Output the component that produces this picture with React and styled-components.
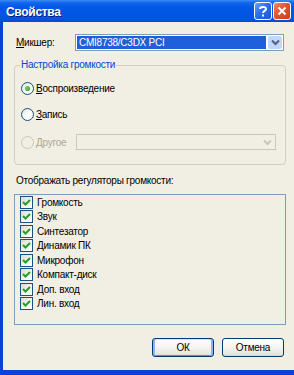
import React from "react";
import styled, { createGlobalStyle } from "styled-components";

const Global = createGlobalStyle`
  html, body { margin: 0; padding: 0; }
  body { width: 294px; height: 375px; overflow: hidden; background: #fff; }
  * { box-sizing: border-box; }
`;

const FONT = `"Liberation Sans", Arial, sans-serif`;

const Window = styled.div`
  width: 294px;
  height: 375px;
  display: flex;
  flex-direction: column;
  background: #0842d6;
  font-family: ${FONT};
  font-size: 10px;
  letter-spacing: -0.25px;
  color: #000;
`;

const TitleBar = styled.div`
  height: 22px;
  flex: none;
  display: flex;
  align-items: flex-start;
  padding: 0 3px 0 6px;
  background: linear-gradient(
    to bottom,
    #3d8cf6 0%,
    #1268f0 12%,
    #0358e8 30%,
    #0156e4 60%,
    #0255e0 85%,
    #0a48d0 100%
  );
`;

const Title = styled.div`
  flex: 1;
  padding-top: 5px;
  font-family: "Liberation Sans", Arial, sans-serif;
  font-weight: bold;
  font-size: 12px;
  color: #fff;
  text-shadow: 1px 1px 0 #0a1f7a;
  letter-spacing: -0.3px;
`;

const CaptionButtons = styled.div`
  display: flex;
  gap: 1px;
  padding-top: 2px;
`;

const CaptionButton = styled.div`
  width: 18px;
  height: 18px;
  border: 1px solid #fff;
  border-radius: 3px;
  display: flex;
  align-items: center;
  justify-content: center;
  background: ${(p) =>
    p.$close
      ? "linear-gradient(135deg, #f0876a 0%, #e2532f 45%, #c8401c 100%)"
      : "linear-gradient(135deg, #6aa0ff 0%, #2a6ef0 45%, #1a55d8 100%)"};
`;

const Body = styled.div`
  flex: 1;
  margin: 0 0 5px 3px;
  background: #f1efe3;
  padding: 12px 8px 13px 11px;
  display: flex;
  flex-direction: column;
`;

const MixerRow = styled.div`
  display: flex;
  align-items: center;
  height: 17px;
`;

const FieldLabel = styled.label`
  width: 61px;
  padding-left: 2px;
  flex: none;
`;

const Combo = styled.div`
  width: ${(p) => p.$w}px;
  height: ${(p) => p.$h}px;
  border: 1px solid ${(p) => (p.$disabled ? "#c9c7ba" : "#7f9db9")};
  background: ${(p) => (p.$disabled ? "#f1efe3" : "#fff")};
  display: flex;
  align-items: stretch;
  padding: 1px;
  flex: none;
`;

const ComboValue = styled.div`
  flex: 1;
  background: #1f5fdb;
  color: #fff;
  padding-left: 2px;
  display: flex;
  align-items: center;
  margin-right: 2px;
`;

const ComboSpacer = styled.div`
  flex: 1;
`;

const ComboButton = styled.div`
  width: 14px;
  display: flex;
  align-items: center;
  justify-content: center;
  background: ${(p) => (p.$disabled ? "transparent" : "#c6d6fb")};
  border-radius: 2px;
`;

const GroupBox = styled.div`
  position: relative;
  margin-top: 14px;
  height: 100px;
  border: 1px solid #d0d0bf;
  border-radius: 4px;
  padding: 14px 8px 0 6px;
  display: flex;
  flex-direction: column;
`;

const Legend = styled.div`
  position: absolute;
  top: -7px;
  left: 5px;
  padding: 0 1px;
  background: #f1efe3;
  color: #0046d5;
  line-height: 12px;
`;

const RadioRow = styled.div`
  display: flex;
  align-items: center;
  height: 16px;
  margin-top: ${(p) => p.$mt || 0}px;
  color: ${(p) => (p.$disabled ? "#aca899" : "#000")};
`;

const RadioCircle = styled.div`
  width: 13px;
  height: 13px;
  border-radius: 50%;
  border: 1px solid ${(p) => (p.$disabled ? "#cac8bb" : "#1c5180")};
  background: ${(p) =>
    p.$disabled
      ? "#f1efe3"
      : "radial-gradient(circle at 65% 70%, #ffffff 20%, #e4e3da 100%)"};
  display: flex;
  align-items: center;
  justify-content: center;
  flex: none;
`;

const RadioDot = styled.div`
  width: 5px;
  height: 5px;
  border-radius: 50%;
  background: radial-gradient(circle at 40% 40%, #7ad37a 0%, #21a121 80%);
`;

const RadioLabel = styled.span`
  margin-left: 2px;
  width: ${(p) => (p.$w ? `${p.$w}px` : "auto")};
  flex: none;
`;

const ListLabel = styled.div`
  margin-top: 10px;
  line-height: 12px;
  height: 12px;
  padding-left: 2px;
`;

const ListBox = styled.div`
  margin-top: 7px;
  height: 131px;
  border: 1px solid #7f9db9;
  background: #f1efe3;
  display: flex;
  flex-direction: column;
  padding-left: 5px;
`;

const ListItem = styled.div`
  height: 14.5px;
  display: flex;
  align-items: center;
  gap: 4px;
`;

const CheckBox = styled.div`
  width: 13px;
  height: 13px;
  border: 1px solid #1c5180;
  background: linear-gradient(135deg, #dcdcd5 0%, #f4f4f0 60%, #ffffff 100%);
  display: flex;
  align-items: center;
  justify-content: center;
  flex: none;
`;

const ButtonRow = styled.div`
  margin-top: 13px;
  display: flex;
  justify-content: flex-end;
  gap: 8px;
  padding-right: 2px;
`;

const Button = styled.div`
  width: 62px;
  height: 19px;
  border: 1px solid #003c74;
  border-radius: 3px;
  background: linear-gradient(to bottom, #ffffff 0%, #f4f4f0 50%, #e6e5dc 90%, #d6d0c5 100%);
  box-shadow: ${(p) =>
    p.$default ? "inset 2px 0 0 #8cb4f2, inset -2px 0 0 #8cb4f2, inset 0 1px 0 #cee7ff, inset 0 -1px 0 #6982ee" : "none"};
  display: flex;
  align-items: center;
  justify-content: center;
`;

const items = [
  "Громкость",
  "Звук",
  "Синтезатор",
  "Динамик ПК",
  "Микрофон",
  "Компакт-диск",
  "Доп. вход",
  "Лин. вход",
];

const Arrow = ({ color }) => (
  <svg width="9" height="7" viewBox="0 0 9 7">
    <path d="M1 1.5 L4.5 5 L8 1.5" fill="none" stroke={color} strokeWidth="2" />
  </svg>
);

const Check = () => (
  <svg width="9" height="9" viewBox="0 0 9 9">
    <path d="M1 4 L3.5 6.5 L8 2" fill="none" stroke="#21a121" strokeWidth="2" />
  </svg>
);

export default function App() {
  return (
    <>
      <Global />
      <Window>
        <TitleBar>
          <Title>Свойства</Title>
          <CaptionButtons>
            <CaptionButton>
              <svg width="10" height="12" viewBox="0 0 10 12">
                <path d="M2 4 C2 1.5 8 1 8 4 C8 6 5 5.8 5 8" fill="none" stroke="#fff" strokeWidth="2" />
                <rect x="4" y="9.5" width="2" height="2" fill="#fff" />
              </svg>
            </CaptionButton>
            <CaptionButton $close>
              <svg width="10" height="10" viewBox="0 0 10 10">
                <path d="M1.5 1.5 L8.5 8.5 M8.5 1.5 L1.5 8.5" stroke="#fff" strokeWidth="2" />
              </svg>
            </CaptionButton>
          </CaptionButtons>
        </TitleBar>
        <Body>
          <MixerRow>
            <FieldLabel><u>М</u>икшер:</FieldLabel>
            <Combo $w={209} $h={17}>
              <ComboValue>CMI8738/C3DX PCI</ComboValue>
              <ComboButton><Arrow color="#4d6185" /></ComboButton>
            </Combo>
          </MixerRow>
          <GroupBox>
            <Legend>Настройка громкости</Legend>
            <RadioRow>
              <RadioCircle><RadioDot /></RadioCircle>
              <RadioLabel><u>В</u>оспроизведение</RadioLabel>
            </RadioRow>
            <RadioRow $mt={10}>
              <RadioCircle />
              <RadioLabel><u>З</u>апись</RadioLabel>
            </RadioRow>
            <RadioRow $mt={12} $disabled>
              <RadioCircle $disabled />
              <RadioLabel $w={40}><u>Д</u>ругое</RadioLabel>
              <Combo $w={200} $h={16} $disabled>
                <ComboSpacer />
                <ComboButton $disabled><Arrow color="#c9c7ba" /></ComboButton>
              </Combo>
            </RadioRow>
          </GroupBox>
          <ListLabel>Отображать регуляторы громкости:</ListLabel>
          <ListBox>
            {items.map((t) => (
              <ListItem key={t}>
                <CheckBox><Check /></CheckBox>
                <span>{t}</span>
              </ListItem>
            ))}
          </ListBox>
          <ButtonRow>
            <Button $default>ОК</Button>
            <Button>Отмена</Button>
          </ButtonRow>
        </Body>
      </Window>
    </>
  );
}
